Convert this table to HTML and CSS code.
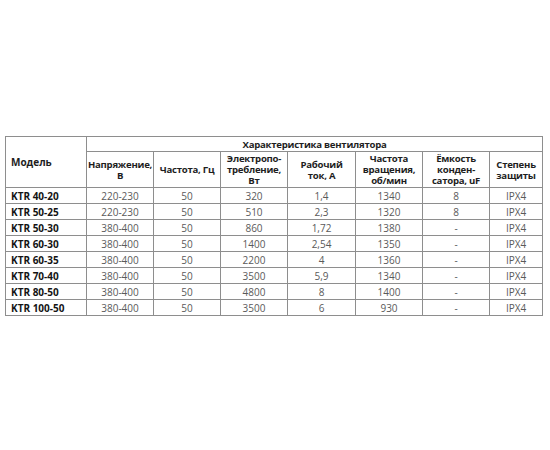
FILE: index.html
```html
<!DOCTYPE html>
<html lang="ru">
<head>
<meta charset="utf-8">
<title>Характеристика вентилятора</title>
<link rel="stylesheet" href="styles.css">
</head>
<body>
<table class="spec">
  <colgroup>
    <col class="c-model">
    <col class="c-std">
    <col class="c-std">
    <col class="c-std">
    <col class="c-wide">
    <col class="c-std">
    <col class="c-std">
    <col class="c-last">
  </colgroup>
  <thead>
    <tr class="h1">
      <th class="model-h" rowspan="2">Модель</th>
      <th colspan="7">Характеристика вентилятора</th>
    </tr>
    <tr class="h2">
      <th>Напряжение,<br>В</th>
      <th>Частота, Гц</th>
      <th>Электропо-<br>требление,<br>Вт</th>
      <th>Рабочий<br>ток, А</th>
      <th>Частота<br>вращения,<br>об/мин</th>
      <th>Ёмкость<br>конден-<br>сатора, uF</th>
      <th>Степень<br>защиты</th>
    </tr>
  </thead>
  <tbody>
    <tr><td class="model">KTR 40-20</td><td>220-230</td><td>50</td><td>320</td><td>1,4</td><td>1340</td><td>8</td><td>IPX4</td></tr>
    <tr><td class="model">KTR 50-25</td><td>220-230</td><td>50</td><td>510</td><td>2,3</td><td>1320</td><td>8</td><td>IPX4</td></tr>
    <tr><td class="model">KTR 50-30</td><td>380-400</td><td>50</td><td>860</td><td>1,72</td><td>1380</td><td>-</td><td>IPX4</td></tr>
    <tr><td class="model">KTR 60-30</td><td>380-400</td><td>50</td><td>1400</td><td>2,54</td><td>1350</td><td>-</td><td>IPX4</td></tr>
    <tr><td class="model">KTR 60-35</td><td>380-400</td><td>50</td><td>2200</td><td>4</td><td>1360</td><td>-</td><td>IPX4</td></tr>
    <tr><td class="model">KTR 70-40</td><td>380-400</td><td>50</td><td>3500</td><td>5,9</td><td>1340</td><td>-</td><td>IPX4</td></tr>
    <tr><td class="model">KTR 80-50</td><td>380-400</td><td>50</td><td>4800</td><td>8</td><td>1400</td><td>-</td><td>IPX4</td></tr>
    <tr><td class="model">KTR 100-50</td><td>380-400</td><td>50</td><td>3500</td><td>6</td><td>930</td><td>-</td><td>IPX4</td></tr>
  </tbody>
</table>
</body>
</html>
```

FILE: styles.css
```css
html, body {
  margin: 0;
  background: #ffffff;
}

body {
  padding: 136px 0 0 5px;
  font-family: "Open Sans", "Noto Sans", "DejaVu Sans", sans-serif;
}

.spec {
  border-collapse: collapse;
  table-layout: fixed;
  width: 538px;
  border: 1px solid #7f7f7f;
}

.c-model { width: 81px; }
.c-std { width: 67px; }
.c-wide { width: 68px; }
.c-last { width: 53px; }

.spec th,
.spec td {
  border: 1px solid #8e8e8e;
  padding: 0;
  text-align: center;
  vertical-align: middle;
}

.spec th {
  font-weight: 700;
  font-size: 9.6px;
  line-height: 11px;
  letter-spacing: -0.25px;
  color: #1e1e1e;
}

.spec th.model-h {
  text-align: left;
  padding-left: 5px;
  font-size: 10px;
  letter-spacing: 0;
}

.h1 { height: 15px; }
.h2 { height: 36px; }

.spec td {
  font-size: 10px;
  line-height: 12px;
  color: #5a5a5a;
  height: 15px;
}

.spec td.model {
  text-align: left;
  padding-left: 5px;
  font-weight: 700;
  color: #141414;
}
```
